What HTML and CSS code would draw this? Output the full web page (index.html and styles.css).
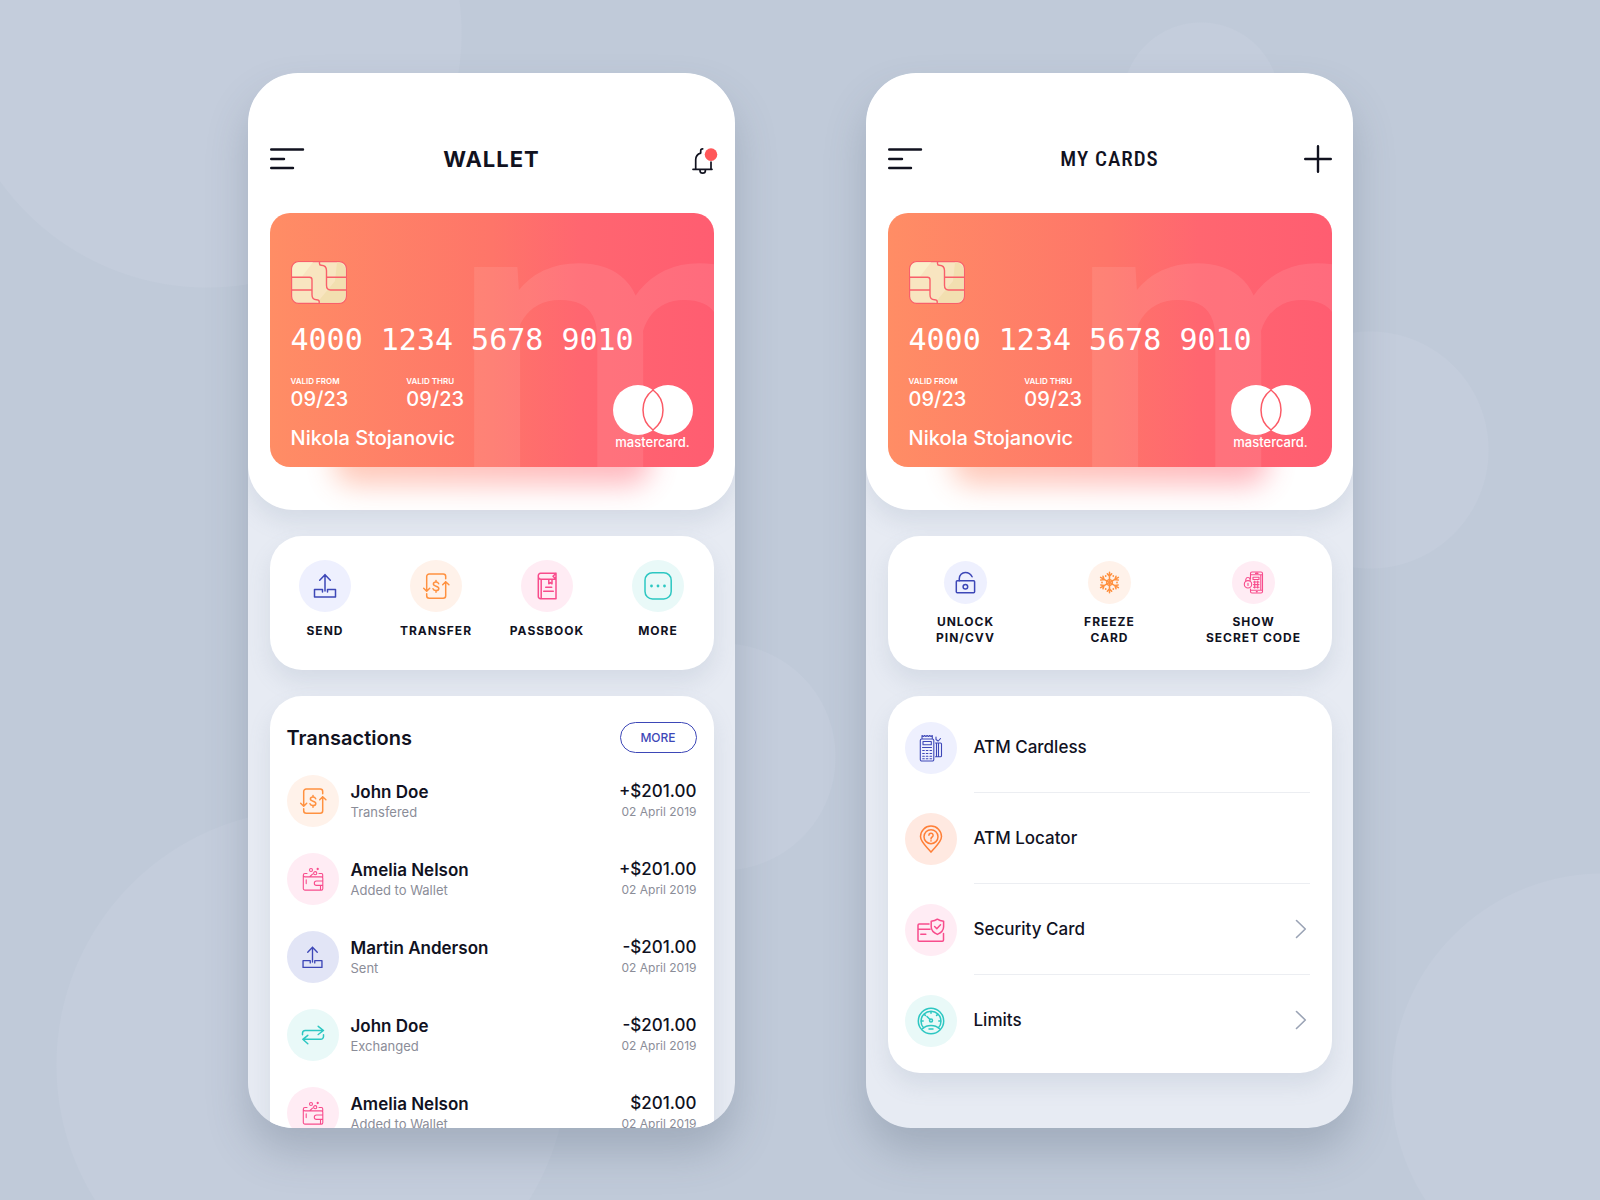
FILE: index.html
```html
<!DOCTYPE html>
<html lang="en">
<head>
<meta charset="utf-8">
<meta name="viewport" content="width=device-width, initial-scale=1">
<title>Wallet</title>
<link rel="stylesheet" href="styles.css">
</head>
<body>
<svg class="sprite" aria-hidden="true">
  <symbol id="i-menu" viewBox="0 0 36 24"><path d="M1.200 2.500H33M1.200 12H14M1.200 21H23" stroke-width="2.400"/></symbol>
  <symbol id="i-plus" viewBox="0 0 28 28"><path d="M14 1.200V26.800M1.200 14H26.800" stroke-width="2.400"/></symbol>
  <symbol id="i-send" viewBox="0 0 30 30"><path d="M15 20V3.500M9.700 9.200 15 3.700l5.300 5.500M12.500 21v-2.500H4.500V26h21v-7.500h-8V21"/></symbol>
  <symbol id="i-transfer" viewBox="0 0 30 30"><path d="M24.700 7.700V5.500A2.500 2.500 0 0 0 22.200 3H8.200A2.500 2.500 0 0 0 5.700 5.500V20M2.700 17.200l3 3 3-3M5.700 22.700v2A2.500 2.500 0 0 0 8.200 27.200h14A2.500 2.500 0 0 0 24.700 24.700V10.800M21.700 13.800l3-3 3.200 3M17.700 12.700c-.5-1.100-1.400-1.600-2.700-1.600-1.600 0-2.600.8-2.600 2s1 1.700 2.600 2.100 2.800 1 2.800 2.300-1.200 2.100-2.800 2.100-2.600-.7-3-1.800M15 9.500v1.600M15 19.600v1.600"/></symbol>
  <symbol id="i-book" viewBox="0 0 30 30"><path d="M24 2.300H8.500a2.200 2.200 0 0 0-2.200 2.200v1.200A2.500 2.500 0 0 0 8.800 8.200H24v19.500H8.500a2.200 2.200 0 0 1-2.200-2.200V5M24 2.300 21 5.200l3 3V2.300M9.200 8.200v19.500M16.800 8.200v4.600l1.600-1.200 1.600 1.200V8.200M13.700 16.200h6M11.700 20.200h9.600"/></symbol>
  <symbol id="i-more" viewBox="0 0 30 30"><rect x="2" y="1.700" width="26.200" height="26.200" rx="7.500"/><g class="solid"><circle cx="8.500" cy="15" r="1.400"/><circle cx="15" cy="15" r="1.400"/><circle cx="21.500" cy="15" r="1.400"/></g></symbol>
  <symbol id="i-wallet" viewBox="0 0 30 30"><path d="M9 9.500H7a1.700 1.700 0 0 0 0 3.400h16.500a1.300 1.300 0 0 1 1.300 1.300v10.600a1.300 1.300 0 0 1-1.300 1.300H7a1.700 1.700 0 0 1-1.700-1.700V11.200M21 9.500h2.500a1.200 1.200 0 0 1 1.200 1.200v2.500M24.800 17h-6.300a2.200 2.200 0 0 0 0 4.400h6.300M8.200 15.800v3.800M22.500 21.500v4.500M12 12.500l2.500-2.300"/><circle cx="13" cy="6" r="1.500"/><circle cx="17.200" cy="9.200" r="1.600"/><circle cx="19.700" cy="5" r=".6"/></symbol>
  <symbol id="i-exchange" viewBox="0 0 30 30"><path d="M4.500 14.800v-1.500a2.800 2.800 0 0 1 2.800-2.800h18M20.200 6.300l5.300 4.200-5.300 4M25.500 14.800v1.700a2.800 2.800 0 0 1-2.800 2.800H5M9.800 15.300l-5 4 5 4.500"/></symbol>
  <symbol id="i-unlock" viewBox="0 0 25 25"><rect x="3.300" y="10.700" width="18.300" height="12" rx="1"/><path d="M6.300 10.700V8.500a6 6 0 0 1 6-6c3 0 5.500 1.500 6.800 4.300"/><circle cx="12.400" cy="16.700" r="2.300"/></symbol>
  <symbol id="i-snow" viewBox="0 0 25 25">
    <g id="snow-axis"><path d="M12.500 2.200v20.600M10.300 3.700l2.200 2.600 2.200-2.600M10.300 21.300l2.200-2.600 2.200 2.600"/></g>
    <use href="#snow-axis" transform="rotate(60 12.500 12.500)"/><use href="#snow-axis" transform="rotate(120 12.500 12.500)"/>
    <path d="M12.500 9.300l2.800 1.600v3.200l-2.800 1.600-2.800-1.600v-3.200z"/>
    <g class="solid"><circle cx="8.700" cy="6" r=".9"/><circle cx="16.300" cy="6" r=".9"/><circle cx="20" cy="12.500" r=".9"/><circle cx="16.300" cy="19" r=".9"/><circle cx="8.700" cy="19" r=".9"/><circle cx="5" cy="12.500" r=".9"/></g>
  </symbol>
  <symbol id="i-code" viewBox="0 0 25 25"><path d="M9.500 9V3.500A1.500 1.500 0 0 1 11 2h9a1.500 1.500 0 0 1 1.500 1.500v18A1.500 1.500 0 0 1 20 23h-9a1.500 1.500 0 0 1-1.500-1.500V19M9.500 4.800h12M9.500 20.200h12M19.800 4.800v15.400M12 7.200h6v2.300h-6zM12.500 12h5.500M12.500 14.600h5.500M12.500 17.200h5.500M13.700 11v7M16.700 11v7M14.500 3.400h2.500M15.300 21.600h1M4.800 10.800V9.300a2.200 2.200 0 0 1 4.300 0v1.500M7 13.300v2.200"/><circle cx="7" cy="14.300" r="3.700"/></symbol>
  <symbol id="i-terminal" viewBox="0 0 30 30"><path d="M6 6V2.500l1.300 1 1.300-1 1.300 1 1.200-1 1.300 1 1.300-1 1.300 1 1.300-1V6M17.800 24v2.500a1.500 1.500 0 0 1-1.500 1.500H5.800a1.500 1.500 0 0 1-1.500-1.500V7.500A1.500 1.500 0 0 1 5.800 6h10.500a1.500 1.500 0 0 1 1.500 1.500V24M7 8.500h8.300v3.300H7zM6.500 14.500h9M6.700 17.500h1.600M10.300 17.500h1.600M14 17.500h1.600M6.700 20.500h1.600M10.300 20.500h1.600M14 20.500h1.600M6.700 23.200h1.600M10.300 23.200h1.600M14 23.200h1.600M6.700 25.800h1.600M10.300 25.800h1.600M14 25.800h1.600M19.500 10H24.500a1 1 0 0 1 1 1v11.800a1 1 0 0 1-1 1h-5M20.500 10v13.700M22.500 10v13.700M20 4v2.500l2 1.500M24.500 5.500 22.300 8"/></symbol>
  <symbol id="i-pin" viewBox="0 0 30 30"><path d="M15 28.200C12 23.700 4.500 18.500 4.500 12.600a10.500 10.500 0 0 1 21 0C25.500 18.500 18 23.700 15 28.200z"/><circle cx="15" cy="12.700" r="7"/><path d="M12.900 11.300a2.100 2.100 0 1 1 3.300 1.700c-.8.500-1.200.9-1.200 1.900M15 16.700v.4"/></symbol>
  <symbol id="i-shield" viewBox="0 0 30 30"><path d="M13 9H3.200A1.200 1.200 0 0 0 2 10.200V25a1.200 1.200 0 0 0 1.200 1.200h23.100a1.200 1.200 0 0 0 1.200-1.200v-6.500M2 14.200h12M4.800 19.200h5M21.400 4.200c1.700 1.300 3.800 1.900 6.200 2v5.600c0 3.500-2.700 6.100-6.200 7.600-3.500-1.500-6.200-4.100-6.200-7.600V6.200c2.400-.1 4.500-.7 6.200-2zM18.600 11.500l2.200 2.200 3.700-4"/></symbol>
  <symbol id="i-gauge" viewBox="0 0 30 30"><circle cx="15" cy="15" r="12.700"/><path d="M7.700 22A10 10 0 1 1 22.300 22M6.500 22.700C11 18.500 19 18.500 23.500 22.700M13 23h4M15 5.200v2M5.200 15h2M24.800 15h-2M8 8l1.400 1.400M22 8l-1.400 1.400M11 10.500l3 3"/><circle cx="15" cy="14.500" r="1.500"/></symbol>
  <symbol id="i-chevron" viewBox="0 0 12 20"><path d="M1.500 1.500 10.300 10 1.500 18.500" stroke-width="1.600"/></symbol>
  <symbol id="i-chip" viewBox="0 0 56 43">
    <rect x=".6" y=".6" width="54.800" height="41.800" rx="7" fill="#f8e5c0" stroke="#f9606a" stroke-width="1.200"/>
    <path d="M8 1.300h14L11 15.500H1.300V8A6.700 6.700 0 0 1 8 1.300z" fill="#faf0cb"/>
    <path d="M46 1.300a8.500 8.500 0 0 1 8.700 8.500V34a8 8 0 0 1-8 7.700H26L44 20z" fill="#f2dfb0"/>
    <path d="M28.500.5v2.300c0 1 .6 1.500 1.700 1.500 3.300 0 5.300 2.200 5.300 5.500v14.500c0 3 1.300 4.700 4 4.700H55.500M35.500 16.200h20M.5 16.200h18c1.700 0 2.500.8 2.500 2.500v15c0 3 1.500 5 4.500 5 1.800 0 2.700.5 2.700 1.800V43M.5 29H21" fill="none" stroke="#f9606a" stroke-width="1.400"/>
  </symbol>
  <symbol id="i-rings" viewBox="0 0 80 50"><circle cx="25" cy="25" r="25" fill="#fff"/><circle cx="55" cy="25" r="25" fill="#fff"/><path d="M40 5a25 25 0 0 1 0 40a25 25 0 0 1 0-40z" fill="none" stroke="#fb5a66" stroke-width="1.500"/></symbol>
</svg>

<main class="stage">
  <section class="phone" aria-label="Wallet">
    <div class="top">
      <header class="bar">
        <button class="icon-btn" type="button" aria-label="Menu"><svg class="ic menu"><use href="#i-menu"/></svg></button>
        <h1 class="title">WALLET</h1>
        <button class="icon-btn end" type="button" aria-label="Notifications">
          <svg class="ic bell" viewBox="0 0 22 30"><path d="M1 25.300h19M3.700 25.300v-9.500c0-3.500 2-5.800 5-6.700V6.800c0-1.200.7-2 2-2M19 18v7.300M8 25.500v1a2.700 2.700 0 0 0 5.400 0v-1" stroke-width="1.700"/><circle cx="19" cy="10.600" r="6.300" fill="#ff5759" stroke="none"/></svg>
        </button>
      </header>
      <div class="card-wrap">
        <article class="card">
          <span class="mark" aria-hidden="true">m</span>
          <svg class="chip" aria-hidden="true"><use href="#i-chip"/></svg>
          <p class="number">4000 1234 5678 9010</p>
          <div class="card-foot">
            <div>
              <dl class="dates"><div><dt>VALID FROM</dt><dd>09/23</dd></div><div><dt>VALID THRU</dt><dd>09/23</dd></div></dl>
              <p class="holder">Nikola Stojanovic</p>
            </div>
            <div class="brand"><svg class="rings" aria-hidden="true"><use href="#i-rings"/></svg><span>mastercard.</span></div>
          </div>
        </article>
      </div>
    </div>

    <nav class="panel actions four" aria-label="Actions">
      <button class="action" type="button"><span class="dot blue"><svg class="ic"><use href="#i-send"/></svg></span>SEND</button>
      <button class="action" type="button"><span class="dot orange"><svg class="ic"><use href="#i-transfer"/></svg></span>TRANSFER</button>
      <button class="action" type="button"><span class="dot pink"><svg class="ic"><use href="#i-book"/></svg></span>PASSBOOK</button>
      <button class="action" type="button"><span class="dot teal"><svg class="ic"><use href="#i-more"/></svg></span>MORE</button>
    </nav>

    <section class="panel history">
      <div class="history-head"><h2>Transactions</h2><button class="pill" type="button">MORE</button></div>
      <ul class="rows">
        <li class="row"><span class="dot orange"><svg class="ic"><use href="#i-transfer"/></svg></span><div class="who"><strong>John Doe</strong><span>Transfered</span></div><div class="sum"><b>+$201.00</b><span>02 April 2019</span></div></li>
        <li class="row"><span class="dot pink thin"><svg class="ic"><use href="#i-wallet"/></svg></span><div class="who"><strong>Amelia Nelson</strong><span>Added to Wallet</span></div><div class="sum"><b>+$201.00</b><span>02 April 2019</span></div></li>
        <li class="row"><span class="dot indigo"><svg class="ic small"><use href="#i-send"/></svg></span><div class="who"><strong>Martin Anderson</strong><span>Sent</span></div><div class="sum"><b>-$201.00</b><span>02 April 2019</span></div></li>
        <li class="row"><span class="dot teal"><svg class="ic"><use href="#i-exchange"/></svg></span><div class="who"><strong>John Doe</strong><span>Exchanged</span></div><div class="sum"><b>-$201.00</b><span>02 April 2019</span></div></li>
        <li class="row"><span class="dot pink thin"><svg class="ic"><use href="#i-wallet"/></svg></span><div class="who"><strong>Amelia Nelson</strong><span>Added to Wallet</span></div><div class="sum"><b>$201.00</b><span>02 April 2019</span></div></li>
      </ul>
    </section>
  </section>

  <section class="phone" aria-label="My cards">
    <div class="top">
      <header class="bar">
        <button class="icon-btn" type="button" aria-label="Menu"><svg class="ic menu"><use href="#i-menu"/></svg></button>
        <h1 class="title narrow">MY CARDS</h1>
        <button class="icon-btn end" type="button" aria-label="Add card"><svg class="ic plus"><use href="#i-plus"/></svg></button>
      </header>
      <div class="card-wrap">
        <article class="card">
          <span class="mark" aria-hidden="true">m</span>
          <svg class="chip" aria-hidden="true"><use href="#i-chip"/></svg>
          <p class="number">4000 1234 5678 9010</p>
          <div class="card-foot">
            <div>
              <dl class="dates"><div><dt>VALID FROM</dt><dd>09/23</dd></div><div><dt>VALID THRU</dt><dd>09/23</dd></div></dl>
              <p class="holder">Nikola Stojanovic</p>
            </div>
            <div class="brand"><svg class="rings" aria-hidden="true"><use href="#i-rings"/></svg><span>mastercard.</span></div>
          </div>
        </article>
      </div>
    </div>

    <nav class="panel actions three" aria-label="Card actions">
      <button class="action" type="button"><span class="dot mini blue"><svg class="ic"><use href="#i-unlock"/></svg></span>UNLOCK<br>PIN/CVV</button>
      <button class="action" type="button"><span class="dot mini orange"><svg class="ic"><use href="#i-snow"/></svg></span>FREEZE<br>CARD</button>
      <button class="action" type="button"><span class="dot mini pink thin"><svg class="ic"><use href="#i-code"/></svg></span>SHOW<br>SECRET CODE</button>
    </nav>

    <ul class="panel links">
      <li><a class="link" href="#cardless"><span class="dot blue thin"><svg class="ic"><use href="#i-terminal"/></svg></span><span class="link-text">ATM Cardless</span></a></li>
      <li><a class="link" href="#locator"><span class="dot coral"><svg class="ic"><use href="#i-pin"/></svg></span><span class="link-text">ATM Locator</span></a></li>
      <li><a class="link" href="#security"><span class="dot pink"><svg class="ic"><use href="#i-shield"/></svg></span><span class="link-text">Security Card<svg class="ic chevron"><use href="#i-chevron"/></svg></span></a></li>
      <li><a class="link" href="#limits"><span class="dot teal"><svg class="ic"><use href="#i-gauge"/></svg></span><span class="link-text">Limits<svg class="ic chevron"><use href="#i-chevron"/></svg></span></a></li>
    </ul>
  </section>
</main>
</body>
</html>
```
FILE: styles.css
```css
* { box-sizing: border-box; }

:root {
  --ink: #11121f;
  --muted: #8b8d98;
  --bubble: #c4cddc;
}

body {
  margin: 0;
  min-height: 100vh;
  font-family: Inter, "Liberation Sans", sans-serif;
  color: var(--ink);
  background:
    radial-gradient(circle at 207px 33px, var(--bubble) 254px, transparent 255px),
    radial-gradient(circle at 1201px 101px, var(--bubble) 78px, transparent 79px),
    radial-gradient(circle at 1370px 450px, var(--bubble) 118px, transparent 119px),
    radial-gradient(circle at 722px 757px, var(--bubble) 113px, transparent 114px),
    radial-gradient(circle at 312px 1065px, var(--bubble) 255px, transparent 256px),
    radial-gradient(circle at 1603px 1085px, var(--bubble) 211px, transparent 212px),
    #c0cad9;
}

h1, h2, p, ul, dl, dd { margin: 0; padding: 0; }
ul { list-style: none; }

button {
  margin: 0;
  padding: 0;
  border: 0;
  background: none;
  font: inherit;
  color: inherit;
  cursor: pointer;
}

.sprite { position: absolute; width: 0; height: 0; }

.ic {
  display: block;
  width: 30px;
  height: 30px;
  fill: none;
  stroke: currentColor;
  stroke-width: 1.5;
  stroke-linecap: round;
  stroke-linejoin: round;
}
.ic.small { width: 27px; height: 27px; }
.solid { fill: currentColor; stroke: none; }

.stage {
  display: flex;
  justify-content: center;
  gap: 131px;
  padding: 73px 32px 72px;
}

.phone {
  flex: 0 1 487px;
  min-width: 0;
  aspect-ratio: 487 / 1055;
  display: flex;
  flex-direction: column;
  gap: 26px;
  overflow: hidden;
  border-radius: 50px 50px 45px 45px;
  background: #e7ebf3;
  box-shadow: 0 24px 40px rgba(72, 90, 110, .26);
}

.top {
  flex: none;
  padding: 66px 21px 43px 22px;
  border-radius: 50px 50px 45px 45px;
  background: #fff;
  box-shadow: 0 12px 22px rgba(120, 135, 160, .16);
}

.bar {
  display: grid;
  grid-template-columns: 1fr auto 1fr;
  align-items: center;
  height: 40px;
  margin-bottom: 34px;
}
.title { font-size: 22px; line-height: 28px; font-weight: 700; letter-spacing: 1px; }
.title.narrow { font-family: "Liberation Sans Narrow", "Roboto Condensed", Roboto, sans-serif; font-size: 21px; font-weight: 500; }
.icon-btn { justify-self: start; }
.icon-btn.end { justify-self: end; }
.menu { width: 36px; height: 24px; }
.plus { width: 28px; height: 28px; }
.bell { width: 22px; height: 30px; overflow: visible; }

.card-wrap { position: relative; isolation: isolate; }
.card-wrap::before {
  content: "";
  position: absolute;
  z-index: -1;
  inset: auto 64px -18px;
  height: 60px;
  border-radius: 20px;
  background: linear-gradient(90deg, #ff8c66, #ff5f72);
  filter: blur(14px);
  opacity: .45;
}

.card {
  position: relative;
  overflow: hidden;
  min-height: 254px;
  padding: 48px 21px 16px;
  border-radius: 20px;
  color: #fff;
  background: linear-gradient(90deg, #ff8d65, #fe7569 50%, #ff6670 70%, #ff5d71);
}
.card > * { position: relative; }
.card > .mark {
  position: absolute;
  left: 181px;
  bottom: -8px;
  font-family: Roboto, sans-serif;
  font-size: 390px;
  line-height: 270px;
  font-weight: 500;
  color: rgba(255, 255, 255, .09);
}
.chip { display: block; width: 56px; height: 43px; }
.number {
  margin: 18px 0;
  font-family: "DejaVu Sans Mono", monospace;
  font-size: 30px;
  line-height: 36px;
  white-space: nowrap;
}
.card-foot { display: flex; justify-content: space-between; align-items: flex-end; }
.dates { display: flex; gap: 58px; margin-bottom: 13px; }
.dates dt { font-size: 8px; line-height: 10px; font-weight: 600; }
.dates dd { font-size: 20px; line-height: 26px; font-weight: 500; }
.holder { font-size: 20px; line-height: 26px; font-weight: 500; }
.brand { display: grid; justify-items: center; gap: 1px; padding-bottom: 2px; font-size: 13px; line-height: 13px; font-weight: 500; }
.rings { width: 80px; height: 50px; }

.panel {
  flex: none;
  margin: 0 21px 0 22px;
  border-radius: 32px;
  background: #fff;
  box-shadow: 0 12px 22px rgba(120, 135, 160, .16);
}

.dot {
  flex: none;
  display: grid;
  place-items: center;
  width: 52px;
  height: 52px;
  border-radius: 50%;
}
.dot.mini { width: 43px; height: 43px; }
.mini .ic { width: 25px; height: 25px; }
.thin .ic { stroke-width: 1.1; }
.blue { color: #3d47b7; background: #eef0fe; }
.indigo { color: #3d47b7; background: #e2e5f6; }
.orange { color: #ff9140; background: #fff2ea; }
.coral { color: #ff7f37; background: #ffe9e1; }
.pink { color: #f84c8c; background: #ffecf4; }
.teal { color: #2dc7c2; background: #e9f9f8; }

.actions { display: grid; min-height: 134px; align-items: start; }
.four { grid-template-columns: repeat(4, 1fr); padding: 24px 0; }
.three { grid-template-columns: repeat(3, 1fr); padding: 25px 6px 24px; }
.action {
  font-size: 12px;
  line-height: 16px;
  font-weight: 700;
  letter-spacing: 1px;
  text-align: center;
}
.action .dot { margin: 0 auto 11px; }
.action .mini { margin-bottom: 10px; }

.history { padding: 26px 17px; }
.history-head { display: flex; justify-content: space-between; align-items: center; margin-bottom: 22px; }
.history h2 { font-size: 20px; line-height: 26px; font-weight: 600; }
.pill {
  width: 77px;
  height: 31px;
  border: 1px solid #3d47b7;
  border-radius: 16px;
  color: #3d47b7;
  font-size: 12px;
  font-weight: 500;
}
.rows { display: grid; gap: 26px; }
.row { display: flex; align-items: center; gap: 12px; }
.who { flex: 1; min-width: 0; padding-top: 2px; }
.who, .sum { display: grid; line-height: 20px; font-size: 13px; color: var(--muted); }
.who strong { font-size: 17px; font-weight: 600; color: var(--ink); }
.sum { text-align: right; gap: 1px; }
.sum b { font-size: 17px; font-weight: 500; color: var(--ink); }
.sum span { font-size: 12px; }

.links { padding: 6px 22px 7px 17px; }
.link { display: flex; align-items: center; gap: 17px; color: inherit; text-decoration: none; }
.link-text {
  flex: 1;
  display: flex;
  align-items: center;
  justify-content: space-between;
  height: 91px;
  padding-right: 3px;
  border-bottom: 1px solid #eceef2;
  font-size: 17px;
  font-weight: 500;
}
.links li:last-child .link-text { border-bottom-color: transparent; }
.chevron { width: 12px; height: 20px; color: #9aa3b5; }
```
